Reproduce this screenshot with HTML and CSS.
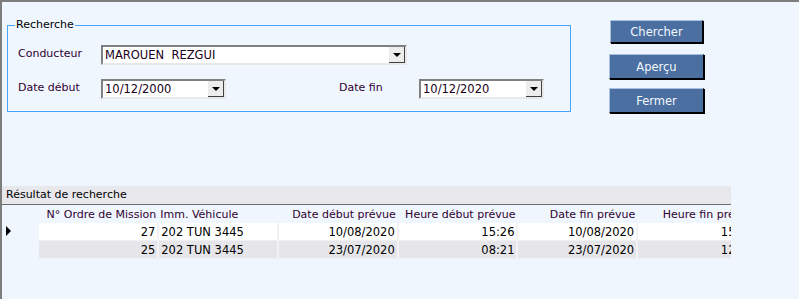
FILE: index.html
```html
<!DOCTYPE html>
<html>
<head>
    <title>Recherche missions</title>
    <link rel="stylesheet" href="styles.css">
</head>
<body>
<div class="window">
    <div class="top">
        <div class="group">
            <span class="group-title">Recherche</span>
            <div class="row">
                <label class="lbl">Conducteur</label>
                <div class="combo wide"><span class="val">MAROUEN&nbsp; REZGUI</span><span class="arrow"></span></div>
            </div>
            <div class="row">
                <label class="lbl">Date début</label>
                <div class="combo date"><span class="val">10/12/2000</span><span class="arrow"></span></div>
                <label class="lbl fin">Date fin</label>
                <div class="combo date"><span class="val">10/12/2020</span><span class="arrow"></span></div>
            </div>
        </div>
        <div class="buttons">
            <button class="btn first">Chercher</button>
            <button class="btn">Aperçu</button>
            <button class="btn">Fermer</button>
        </div>
    </div>

    <div class="grid">
        <div class="caption">Résultat de recherche</div>
        <table>
            <thead>
                <tr>
                    <th class="rh"></th>
                    <th class="c r">N° Ordre de Mission</th>
                    <th class="c">Imm. Véhicule</th>
                    <th class="c r">Date début prévue</th>
                    <th class="c r">Heure début prévue</th>
                    <th class="c r">Date fin prévue</th>
                    <th class="c r">Heure fin prévue</th>
                </tr>
            </thead>
            <tbody>
                <tr>
                    <td class="rh"><span class="cur"></span></td>
                    <td class="r">27</td>
                    <td>202 TUN 3445</td>
                    <td class="r">10/08/2020</td>
                    <td class="r">15:26</td>
                    <td class="r">10/08/2020</td>
                    <td class="r">15:30</td>
                </tr>
                <tr class="alt">
                    <td class="rh"></td>
                    <td class="r">25</td>
                    <td>202 TUN 3445</td>
                    <td class="r">23/07/2020</td>
                    <td class="r">08:21</td>
                    <td class="r">23/07/2020</td>
                    <td class="r">12:00</td>
                </tr>
            </tbody>
        </table>
    </div>
</div>
</body>
</html>
```

FILE: styles.css
```css
body { margin: 0; font-family: "DejaVu Sans", Verdana, sans-serif; font-size: 11px; }
.window { height: 297px; border-top: 2px solid #7d7d7d; border-left: 2px solid #7d7d7d; background: #eff6fe; overflow: hidden; }

.top { display: flex; align-items: flex-start; }
.group { position: relative; box-sizing: border-box; width: 564px; margin: 23px 0 0 5px; padding: 19px 0 12px 10px; border: 1px solid #4aa5f8; }
.group-title { position: absolute; top: -8px; left: 7px; padding: 0 1px; background: #eff6fe; color: #000; line-height: 14px; }
.row { display: flex; align-items: flex-start; height: 20px; }
.row + .row { margin-top: 14px; }
.lbl { width: 83px; padding-top: 2px; color: #300030; line-height: 14px; }
.lbl.fin { width: 80px; margin-left: 113px; }

.combo { display: flex; height: 20px; box-sizing: border-box; background: #fff; border: 2px solid #808080; border-right-color: #e8e8e8; border-bottom-color: #e8e8e8; font-size: 11.5px; }
.combo .val { flex: 1; padding-left: 2px; line-height: 17px; color: #200020; }
.combo .arrow { width: 16px; height: 16px; background: #ececec; border-right: 1px solid #404040; border-bottom: 1px solid #404040; box-sizing: border-box; position: relative; }
.combo .arrow::after { content: ""; position: absolute; left: 4px; top: 6px; border-left: 4px solid transparent; border-right: 4px solid transparent; border-top: 4px solid #000; }
.combo.wide { width: 306px; }
.combo.date { width: 125px; }

.buttons { display: flex; flex-direction: column; margin-left: 38px; margin-top: 18px; }
.btn { width: 95px; height: 25px; margin-bottom: 9px; background: #4a6fa0; color: #f4f8ff; font: inherit; font-size: 11.5px; border: 1px solid #000; border-top-color: #a8c0e0; border-left-color: #a8c0e0; box-shadow: 1px 1px 0 #000; padding: 0; }
.btn.first { width: 93px; height: 23px; margin-left: 1px; margin-bottom: 11px; }

.grid { width: 729px; margin-top: 64px; overflow: hidden; }
.caption { height: 18px; line-height: 18px; padding-left: 4px; background: #e8e8ec; border-bottom: 1px solid #6e6e6e; color: #000; }
table { border-collapse: collapse; table-layout: fixed; width: 756px; }
th { height: 18px; font-weight: normal; color: #300030; padding: 0 2px; white-space: nowrap; overflow: hidden; text-align: left; }
td { height: 17px; padding: 0 2px; background: #fff; border-right: 2px solid #f2f2f4; border-bottom: 1px solid #eef0f4; white-space: nowrap; overflow: hidden; color: #000; font-size: 11.5px; }
tr.alt td { background: #e6e6ea; }
td.rh, tr.alt td.rh { background: transparent; border: none; }
.r { text-align: right; }
.c { width: 114px; }
.rh { width: 32px; }
.cur { display: inline-block; margin-left: 2px; border-top: 5px solid transparent; border-bottom: 5px solid transparent; border-left: 5px solid #000; }
```
